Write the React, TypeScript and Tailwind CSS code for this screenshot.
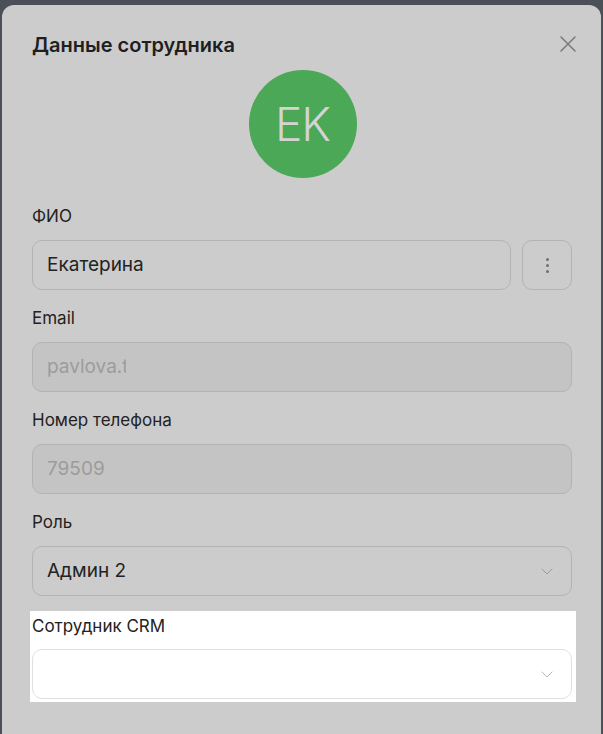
import React from 'react';

const Chevron = ({ color }: { color: string }) => (
    <svg width="12" height="7" viewBox="0 0 12 7" fill="none" className="shrink-0">
        <path d="M1 1l5 5 5-5" stroke={color} strokeWidth="1" strokeLinecap="round" strokeLinejoin="round" />
    </svg>
);

const Label = ({ children }: { children: React.ReactNode }) => (
    <div className="text-[17px] leading-6 text-[#222222]">{children}</div>
);

const App = () => {
    return (
        <div
            className="h-[734px] w-[603px] overflow-hidden bg-[#4b4f57] pl-[2px] pr-[2px] pt-[5px]"
            style={{ fontFamily: 'Inter, "Noto Sans", sans-serif' }}
        >
            <div className="h-[740px] w-[599px] rounded-xl bg-[#cccccc] pl-[30px] pr-[29px] pt-[26px]">
                {/* header */}
                <div className="flex items-center justify-between">
                    <h2 className="text-xl font-semibold leading-7 text-[#1f1f1f]">Данные сотрудника</h2>
                    <button className="mr-[-4px] mt-[-2px] p-0">
                        <svg width="16" height="16" viewBox="0 0 16 16" fill="none">
                            <path d="M1 1l14 14M15 1L1 15" stroke="#7a7a7a" strokeWidth="1.5" strokeLinecap="round" />
                        </svg>
                    </button>
                </div>

                {/* avatar */}
                <div className="mt-[11px] flex justify-center">
                    <div className="ml-[1px] flex h-[108px] w-[108px] items-center justify-center rounded-full bg-[#4aa856]">
                        <span className="text-[46px] font-light leading-none tracking-tight text-[#d4d4d4]">EK</span>
                    </div>
                </div>

                {/* ФИО */}
                <div className="mt-[26px]">
                    <Label>ФИО</Label>
                    <div className="mt-3 flex gap-[11px]">
                        <div className="flex h-[50px] flex-1 items-center rounded-[10px] border border-[#b3b3b3] px-[14px] text-[19px] text-[#222222]">
                            Екатерина
                        </div>
                        <button className="flex h-[50px] w-[50px] flex-col items-center justify-center gap-[3px] rounded-[10px] border border-[#b3b3b3]">
                            <span className="h-[3px] w-[3px] rounded-full bg-[#707070]" />
                            <span className="h-[3px] w-[3px] rounded-full bg-[#707070]" />
                            <span className="h-[3px] w-[3px] rounded-full bg-[#707070]" />
                        </button>
                    </div>
                </div>

                {/* Email */}
                <div className="mt-4">
                    <Label>Email</Label>
                    <div className="mt-3 flex h-[50px] items-center rounded-[10px] border border-[#b3b3b3] bg-[#c4c4c4] px-[14px]">
                        <span className="w-[79px] overflow-hidden whitespace-nowrap text-[19px] text-[#9c9c9c]">pavlova.tatiana@mail.ru</span>
                    </div>
                </div>

                {/* Phone */}
                <div className="mt-4">
                    <Label>Номер телефона</Label>
                    <div className="mt-3 flex h-[50px] items-center rounded-[10px] border border-[#b3b3b3] bg-[#c4c4c4] px-[14px] text-[19px] text-[#9c9c9c]">
                        79509
                    </div>
                </div>

                {/* Role */}
                <div className="mt-4">
                    <Label>Роль</Label>
                    <div className="mt-3 flex h-[50px] items-center justify-between rounded-[10px] border border-[#b3b3b3] pl-[14px] pr-[18px] text-[19px] text-[#222222]">
                        <span>Админ 2</span>
                        <Chevron color="#9a9a9a" />
                    </div>
                </div>

                {/* CRM employee (highlighted) */}
                <div className="ml-[-2px] mr-[-4px] mt-[15px] bg-white pb-[3px] pl-[2px] pr-[4px] pt-[3px]">
                    <Label>Сотрудник CRM</Label>
                    <div className="mt-[11px] flex h-[50px] items-center justify-end rounded-[10px] border border-[#e0e0e0] pr-[18px]">
                        <Chevron color="#b8b8b8" />
                    </div>
                </div>
            </div>
        </div>
    );
};

export default App;
